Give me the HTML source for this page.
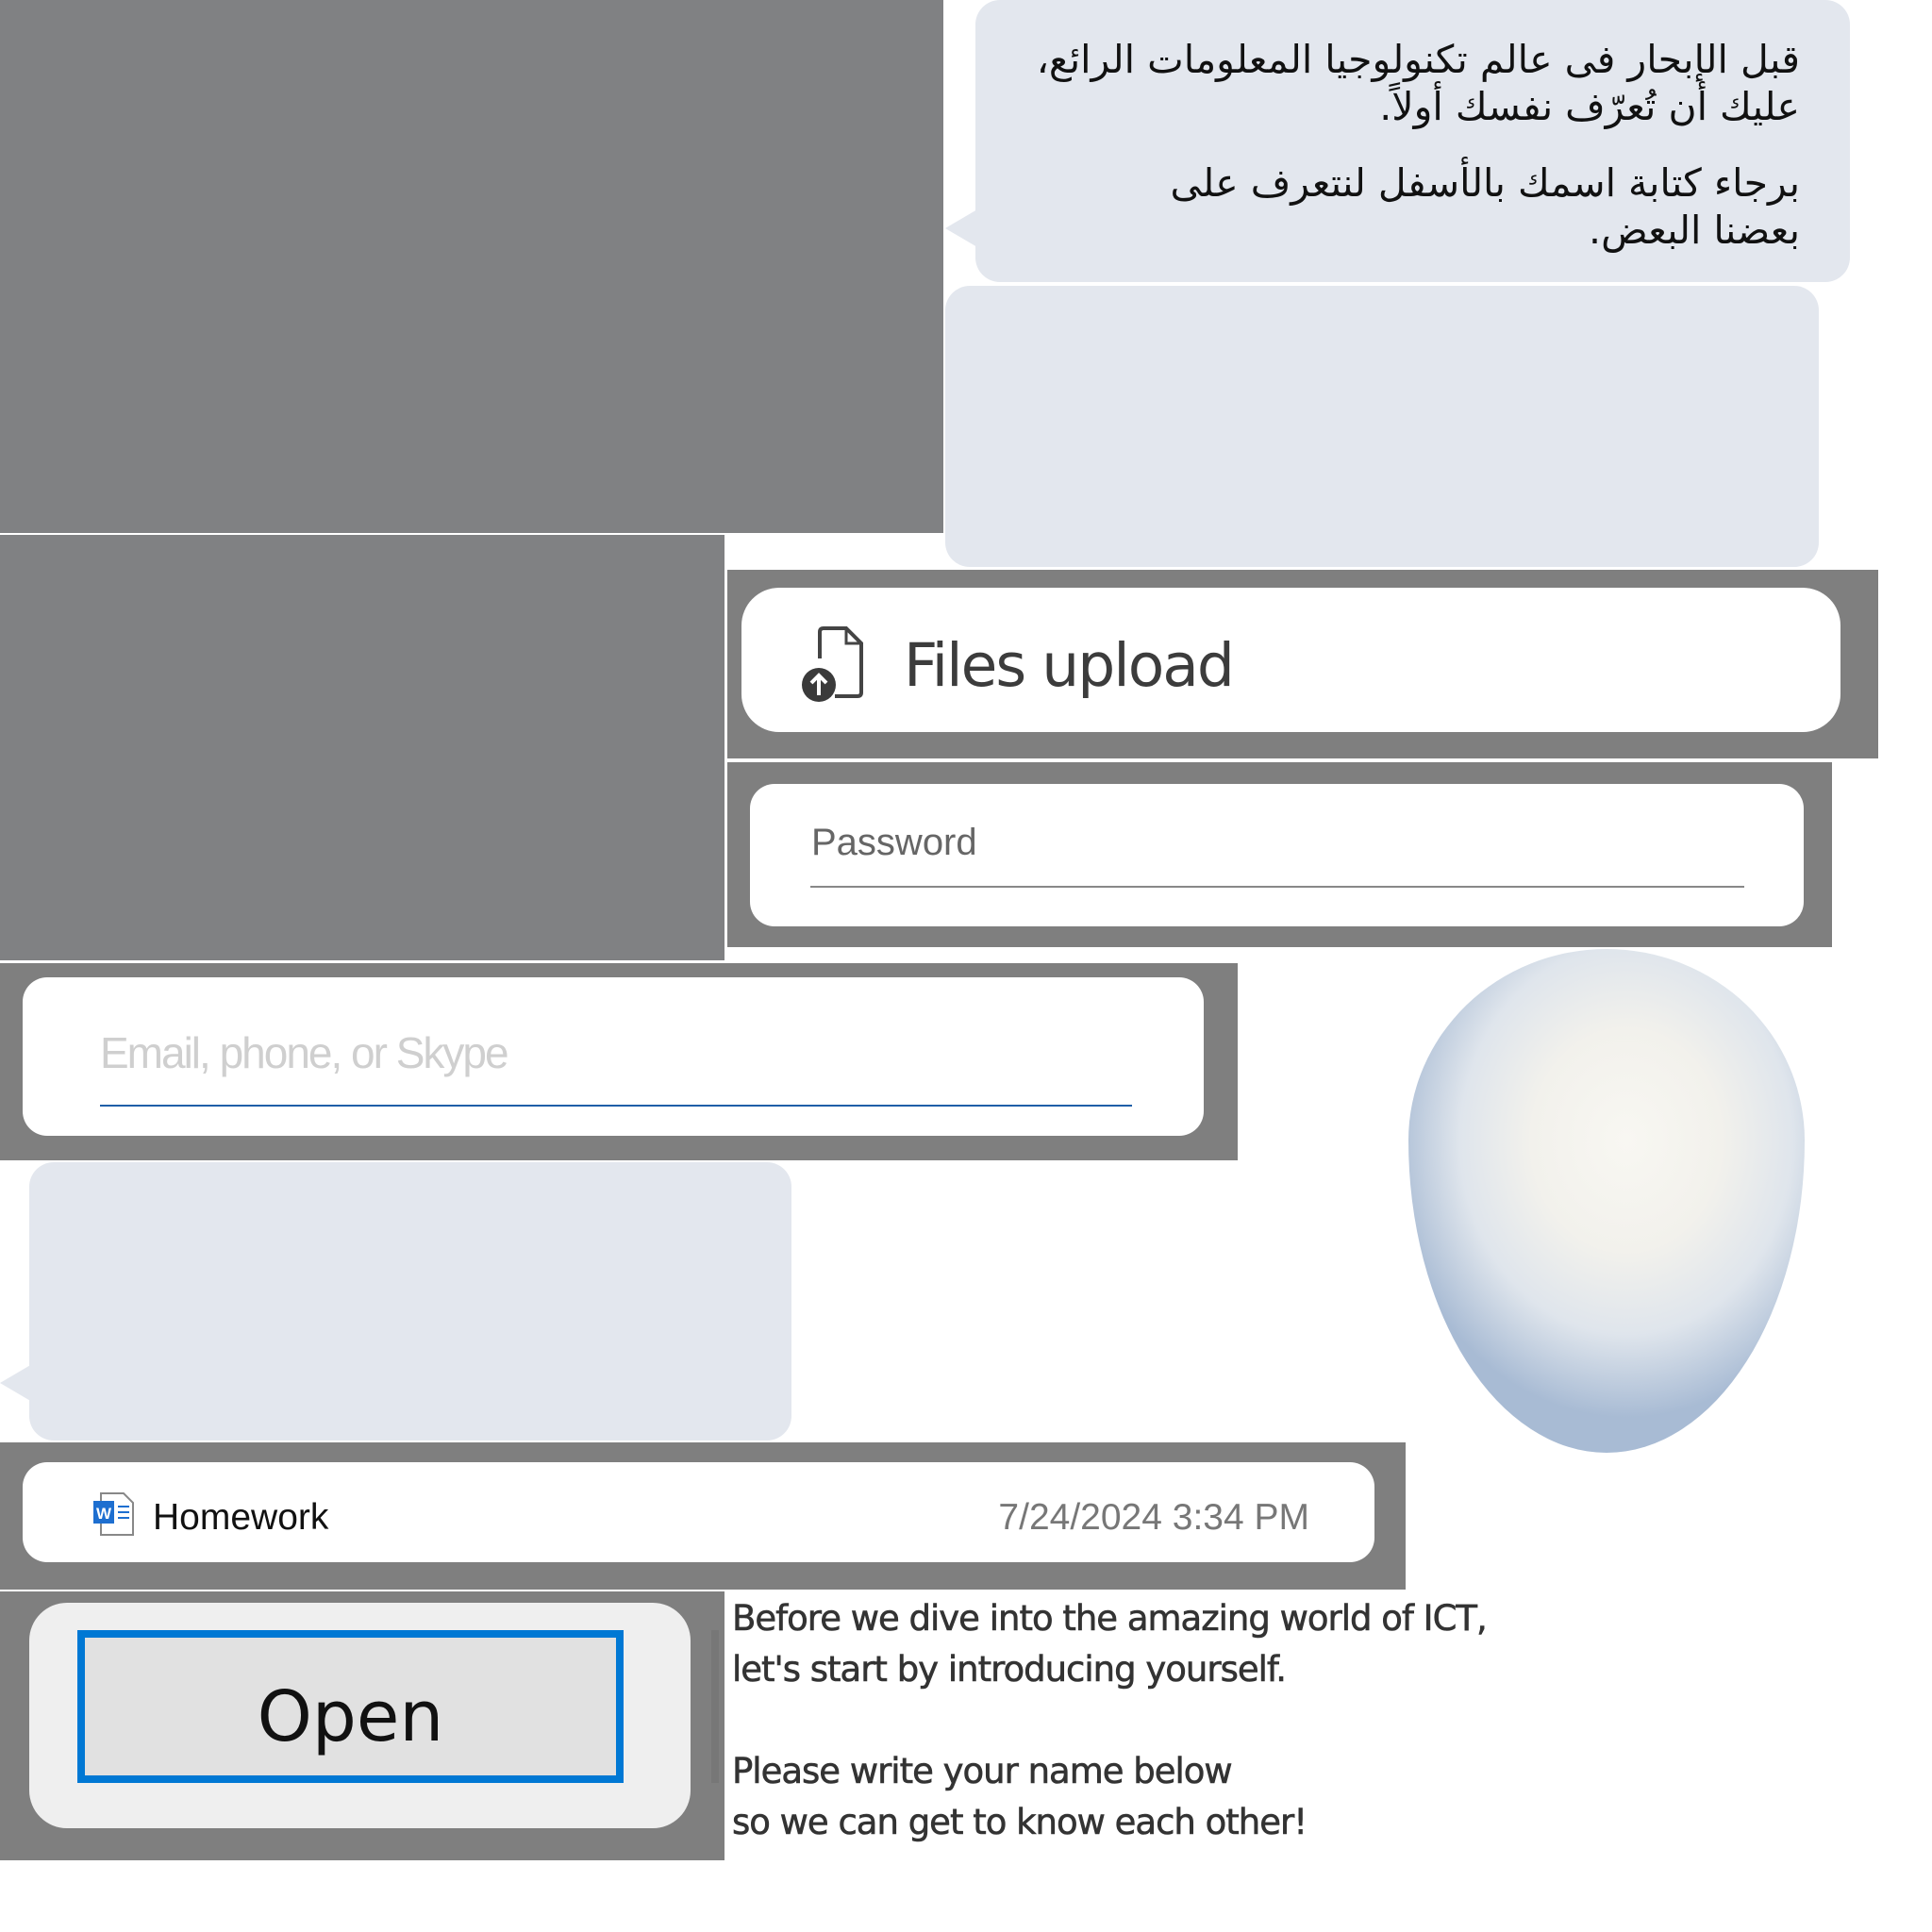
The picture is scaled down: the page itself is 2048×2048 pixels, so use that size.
<!DOCTYPE html>
<html><head><meta charset="utf-8"><style>
*{margin:0;padding:0;box-sizing:border-box}
body{width:2048px;height:2048px;background:#fff;position:relative;overflow:hidden;font-family:"Liberation Sans","DejaVu Sans",sans-serif}
.a{position:absolute}
.g{background:#808183}
.b{background:#e3e7ee;border-radius:26px}
</style></head><body>
<div class="a g" style="left:0;top:0;width:1000px;height:565px"></div>
<div class="a g" style="left:0;top:567px;width:768px;height:451px"></div>

<div class="a b" style="left:1034px;top:0;width:927px;height:299px"></div>
<div class="a" style="left:1002px;top:222px;width:0;height:0;border-top:20px solid transparent;border-bottom:20px solid transparent;border-right:34px solid #e3e7ee"></div>
<div class="a" dir="rtl" style="right:140px;top:38px;width:880px;font-family:'DejaVu Sans',sans-serif;font-size:41px;line-height:50px;color:#111;text-align:right;letter-spacing:-0.5px">
قبل الإبحار فى عالم تكنولوجيا المعلومات  الرائع،<br>عليك أن تُعرّف نفسك أولاً.<br><div style="height:31px"></div>برجاء كتابة اسمك بالأسفل لنتعرف على<br>بعضنا البعض.
</div>

<div class="a b" style="left:1002px;top:303px;width:926px;height:298px"></div>

<div class="a" style="left:771px;top:604px;width:1220px;height:200px;background:#7f7f7f"></div>
<div class="a" style="left:786px;top:623px;width:1165px;height:153px;background:#fff;border-radius:40px"></div>
<svg class="a" style="left:847px;top:662px" width="72" height="82" viewBox="0 0 72 82">
<path d="M22 36V8Q22 4 26 4H50L66 20V72Q66 76 62 76H38" fill="none" stroke="#444" stroke-width="4"/>
<path d="M50 4V20H66" fill="none" stroke="#444" stroke-width="3"/>
<circle cx="21" cy="64" r="18" fill="#3a3a3a"/>
<path d="M21 75V55M13 62L21 54L29 62" fill="none" stroke="#fff" stroke-width="4"/>
</svg>
<div class="a" style="left:958px;top:666px;font-size:63px;line-height:80px;color:#3c3c3c;font-family:'DejaVu Sans',sans-serif;letter-spacing:-2px">Files upload</div>

<div class="a" style="left:771px;top:808px;width:1171px;height:196px;background:#7f7f7f"></div>
<div class="a" style="left:795px;top:831px;width:1117px;height:151px;background:#fff;border-radius:26px"></div>
<div class="a" style="left:860px;top:868px;font-size:40px;line-height:50px;color:#666">Password</div>
<div class="a" style="left:859px;top:939px;width:990px;height:2px;background:#888"></div>

<div class="a" style="left:0;top:1021px;width:1312px;height:209px;background:#7f7f7f"></div>
<div class="a" style="left:24px;top:1036px;width:1252px;height:168px;background:#fff;border-radius:26px"></div>
<div class="a" style="left:106px;top:1088px;font-size:46px;line-height:56px;color:#cfcfcf;letter-spacing:-2px">Email, phone, or Skype</div>
<div class="a" style="left:106px;top:1171px;width:1094px;height:2px;background:#1f5fa8"></div>

<div class="a b" style="left:31px;top:1232px;width:808px;height:295px"></div>
<div class="a" style="left:0;top:1446px;width:0;height:0;border-top:20px solid transparent;border-bottom:20px solid transparent;border-right:34px solid #e3e7ee"></div>

<div class="a" style="left:1493px;top:1006px;width:420px;height:534px;border-radius:50% 50% 50% 50%/38% 38% 62% 62%;background:radial-gradient(ellipse 60% 55% at 55% 38%,#f8f7f2 0%,#f2f1ec 40%,#dfe5ec 70%,#a8bbd4 100%)"></div>

<div class="a" style="left:0;top:1529px;width:1490px;height:156px;background:#7f7f7f"></div>
<div class="a" style="left:24px;top:1550px;width:1433px;height:106px;background:#fff;border-radius:26px"></div>
<svg class="a" style="left:99px;top:1581px" width="44" height="48" viewBox="0 0 44 48">
<path d="M8 2H32L42 12V46H8Z" fill="#fff" stroke="#888" stroke-width="2"/>
<rect x="0" y="10" width="22" height="24" fill="#1e6fd0"/>
<text x="11" y="29" font-size="17" fill="#fff" text-anchor="middle" font-family="Liberation Sans" font-weight="bold">W</text>
<path d="M26 16H38M26 22H38M26 28H38" stroke="#1e6fd0" stroke-width="2"/>
</svg>
<div class="a" style="left:162px;top:1586px;font-size:39px;line-height:46px;color:#111">Homework</div>
<div class="a" style="right:660px;top:1586px;font-size:39px;line-height:46px;color:#777">7/24/2024 3:34 PM</div>

<div class="a" style="left:0;top:1687px;width:768px;height:285px;background:#7f7f7f"></div>
<div class="a" style="left:31px;top:1699px;width:701px;height:239px;background:#efefef;border-radius:40px"></div>
<div class="a" style="left:82px;top:1728px;width:579px;height:162px;background:#e1e1e1;border:8px solid #0078d4"></div>
<div class="a" style="left:82px;top:1770px;width:579px;text-align:center;font-size:74px;line-height:100px;color:#111;font-family:'DejaVu Sans',sans-serif">Open</div>
<div class="a" style="left:754px;top:1728px;width:8px;height:162px;background:#777"></div>

<div class="a" style="left:776px;top:1689px;font-size:37px;line-height:54px;color:#333;font-family:'DejaVu Sans',sans-serif;letter-spacing:-1px;-webkit-text-stroke:0.6px #333">Before we dive into the amazing world of ICT,<br>let's start by introducing yourself.<br><br>Please write your name below<br>so we can get to know each other!</div>
</body></html>
